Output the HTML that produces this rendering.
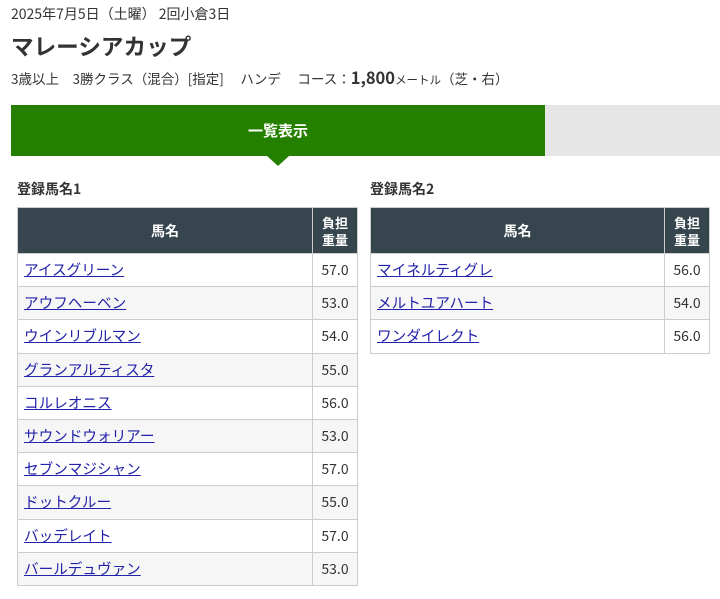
<!DOCTYPE html>
<html><head><meta charset="utf-8"><style>
body{margin:0;background:#fff;font-family:"Noto Sans CJK JP","Liberation Sans",sans-serif;color:#333;width:720px;height:599px;overflow:hidden;position:relative}
.a{position:absolute;white-space:nowrap;line-height:1.3}
table{position:absolute;border-collapse:collapse;font-size:14px}
td,th{border:1px solid #ccc;padding:0}
th{background:#36454e;color:#fff;font-weight:bold;height:45px;font-size:14px}
th.w{line-height:17px;font-size:13px}
td{height:32.2px;line-height:20px}
td.n{padding-left:6px;font-size:14.6px}
td.n a{color:#2222aa;text-decoration:underline}
td.v{text-align:center;color:#333}
tr:nth-child(odd) td{background:#f6f6f6}
</style></head><body>
<div class="a" style="left:11px;top:5px;font-size:14px">2025年7月5日（土曜） 2回小倉3日</div>
<div class="a" style="left:11px;top:31px;font-size:22.6px;font-weight:bold;color:#333">マレーシアカップ</div>
<div class="a" style="left:11px;top:67px;font-size:13.5px">3歳以上　3勝クラス（混合）[指定]　 ハンデ　 コース：<b style="font-size:16.5px">1,800</b><span style="font-size:11.5px">メートル</span>（芝・右）</div>
<div class="a" style="left:11px;top:105px;width:534px;height:51px;background:#268000;color:#fff;font-weight:bold;font-size:15px;text-align:center;line-height:51px">一覧表示</div>
<div class="a" style="left:545px;top:105px;width:175px;height:51px;background:#e6e6e6"></div>
<div class="a" style="left:267px;top:156px;width:0;height:0;border-left:11px solid transparent;border-right:11px solid transparent;border-top:10px solid #268000"></div>
<div class="a" style="left:17px;top:180px;font-size:14px;font-weight:bold">登録馬名1</div>
<div class="a" style="left:370px;top:180px;font-size:14px;font-weight:bold">登録馬名2</div>
<table style="left:17px;top:207px;width:341px">
<tr><th>馬名</th><th class="w" style="width:44px">負担<br>重量</th></tr>
<tr><td class="n"><a>アイスグリーン</a></td><td class="v">57.0</td></tr>
<tr><td class="n"><a>アウフヘーベン</a></td><td class="v">53.0</td></tr>
<tr><td class="n"><a>ウインリブルマン</a></td><td class="v">54.0</td></tr>
<tr><td class="n"><a>グランアルティスタ</a></td><td class="v">55.0</td></tr>
<tr><td class="n"><a>コルレオニス</a></td><td class="v">56.0</td></tr>
<tr><td class="n"><a>サウンドウォリアー</a></td><td class="v">53.0</td></tr>
<tr><td class="n"><a>セブンマジシャン</a></td><td class="v">57.0</td></tr>
<tr><td class="n"><a>ドットクルー</a></td><td class="v">55.0</td></tr>
<tr><td class="n"><a>バッデレイト</a></td><td class="v">57.0</td></tr>
<tr><td class="n"><a>バールデュヴァン</a></td><td class="v">53.0</td></tr>
</table>
<table style="left:370px;top:207px;width:340px">
<tr><th>馬名</th><th class="w" style="width:44px">負担<br>重量</th></tr>
<tr><td class="n"><a>マイネルティグレ</a></td><td class="v">56.0</td></tr>
<tr><td class="n"><a>メルトユアハート</a></td><td class="v">54.0</td></tr>
<tr><td class="n"><a>ワンダイレクト</a></td><td class="v">56.0</td></tr>
</table>
</body></html>
